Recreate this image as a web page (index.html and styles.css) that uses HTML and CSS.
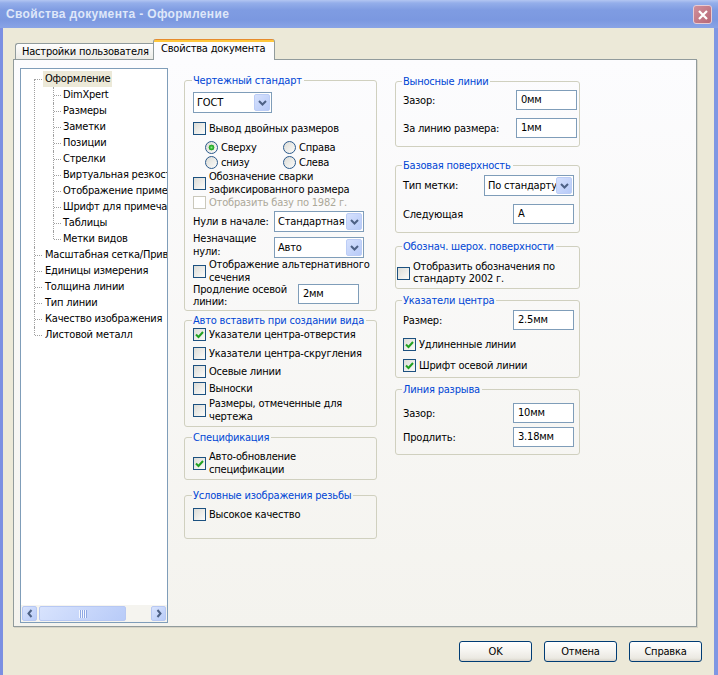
FILE: index.html
```html
<!DOCTYPE html>
<html lang="ru">
<head>
<meta charset="utf-8">
<title>Свойства документа - Оформление</title>
<link rel="stylesheet" href="styles.css">
</head>
<body>
<div class="window">
  <div class="titlebar">
    <span class="title">Свойства документа - Оформление</span>
    <span class="close"><svg width="10" height="10" viewBox="0 0 10 10"><path d="M1 1 L9 9 M9 1 L1 9" stroke="#fff" stroke-width="2.2" fill="none"/></svg></span>
  </div>
  <div class="client">
    <div class="tabs">
      <div class="tab">Настройки пользователя</div>
      <div class="tab active">Свойства документа</div>
    </div>
    <div class="panel">
      <div class="tree">
        <ul class="tree-list root">
          <li class="first"><span class="node sel">Оформление</span>
            <ul class="children">
              <li><span class="node">DimXpert</span></li>
              <li><span class="node">Размеры</span></li>
              <li><span class="node">Заметки</span></li>
              <li><span class="node">Позиции</span></li>
              <li><span class="node">Стрелки</span></li>
              <li><span class="node">Виртуальная резкость</span></li>
              <li><span class="node">Отображение примечаний</span></li>
              <li><span class="node">Шрифт для примечаний</span></li>
              <li><span class="node">Таблицы</span></li>
              <li><span class="node">Метки видов</span></li>
            </ul>
          </li>
          <li><span class="node">Масштабная сетка/Привязки</span></li>
          <li><span class="node">Единицы измерения</span></li>
          <li><span class="node">Толщина линии</span></li>
          <li><span class="node">Тип линии</span></li>
          <li><span class="node">Качество изображения</span></li>
          <li><span class="node">Листовой металл</span></li>
        </ul>
        <div class="hscroll">
          <span class="sbtn"><svg width="6" height="9" viewBox="0 0 6 9"><path d="M4.5 1 L1.5 4.5 L4.5 8" fill="none" stroke="#4d6185" stroke-width="2"/></svg></span>
          <span class="thumb"><span class="grip"></span></span>
          <span class="sbtn end"><svg width="6" height="9" viewBox="0 0 6 9"><path d="M1.5 1 L4.5 4.5 L1.5 8" fill="none" stroke="#4d6185" stroke-width="2"/></svg></span>
        </div>
      </div>

      <div class="col mid">
        <fieldset class="grp">
          <legend>Чертежный стандарт</legend>
          <div class="combo cw79 mt5"><span class="cv">ГОСТ</span><span class="cbtn"><svg width="9" height="6" viewBox="0 0 9 6"><path d="M1 1 L4.5 4.5 L8 1" fill="none" stroke="#4d6185" stroke-width="2"/></svg></span></div>
          <div class="chk h15 mt8"><span class="cb"></span><span class="ct">Вывод двойных размеров</span></div>
          <div class="radios mt4">
            <div class="rad"><span class="rb on"></span><span>Сверху</span></div>
            <div class="rad"><span class="rb"></span><span>Справа</span></div>
            <div class="rad"><span class="rb"></span><span>снизу</span></div>
            <div class="rad"><span class="rb"></span><span>Слева</span></div>
          </div>
          <div class="chk"><span class="cb"></span><span class="ct">Обозначение сварки<br>зафиксированного размера</span></div>
          <div class="chk h13 dis"><span class="cb cb-dis"></span><span class="ct">Отобразить базу по 1982 г.</span></div>
          <div class="row mt2"><span class="lbl lw81 nowrap">Нули в начале:</span><div class="combo cw90"><span class="cv">Стандартная</span><span class="cbtn"><svg width="9" height="6" viewBox="0 0 9 6"><path d="M1 1 L4.5 4.5 L8 1" fill="none" stroke="#4d6185" stroke-width="2"/></svg></span></div></div>
          <div class="row end"><span class="lbl lw81">Незначащие<br>нули:</span><div class="combo cw90"><span class="cv">Авто</span><span class="cbtn"><svg width="9" height="6" viewBox="0 0 9 6"><path d="M1 1 L4.5 4.5 L8 1" fill="none" stroke="#4d6185" stroke-width="2"/></svg></span></div></div>
          <div class="chk"><span class="cb"></span><span class="ct">Отображение альтернативного<br>сечения</span></div>
          <div class="row start pb2"><span class="lbl lw105 lh12">Продление осевой<br>линии:</span><div class="edit ew60">2мм</div></div>
        </fieldset>

        <fieldset class="grp mt3 pb3">
          <legend>Авто вставить при создании вида</legend>
          <div class="chk h14"><span class="cb"><svg width="9" height="9" viewBox="0 0 9 9"><path d="M1 4.5 L3.5 7 L8 2" fill="none" stroke="#21a121" stroke-width="2"/></svg></span><span class="ct">Указатели центра-отверстия</span></div>
          <div class="chk h14 mt5"><span class="cb"></span><span class="ct">Указатели центра-скругления</span></div>
          <div class="chk h14 mt4"><span class="cb"></span><span class="ct">Осевые линии</span></div>
          <div class="chk h14 mt3"><span class="cb"></span><span class="ct">Выноски</span></div>
          <div class="chk mt2"><span class="cb"></span><span class="ct">Размеры, отмеченные для<br>чертежа</span></div>
        </fieldset>

        <fieldset class="grp mt4 pb3">
          <legend>Спецификация</legend>
          <div class="chk mt6"><span class="cb"><svg width="9" height="9" viewBox="0 0 9 9"><path d="M1 4.5 L3.5 7 L8 2" fill="none" stroke="#21a121" stroke-width="2"/></svg></span><span class="ct">Авто-обновление<br>спецификации</span></div>
        </fieldset>

        <fieldset class="grp mt9 pb17">
          <legend>Условные изображения резьбы</legend>
          <div class="chk h14 mt5"><span class="cb"></span><span class="ct">Высокое качество</span></div>
        </fieldset>
      </div>

      <div class="col right">
        <fieldset class="grp gr pr2 pb8">
          <legend>Выносные линии</legend>
          <div class="row h20 mt2"><span class="lbl grow">Зазор:</span><div class="edit ew60">0мм</div></div>
          <div class="row h20 mt8"><span class="lbl grow">За линию размера:</span><div class="edit ew60">1мм</div></div>
        </fieldset>

        <fieldset class="grp gr mt12 pb8">
          <legend>Базовая поверхность</legend>
          <div class="row mt3"><span class="lbl grow">Тип метки:</span><div class="combo cw90"><span class="cv">По стандарту</span><span class="cbtn"><svg width="9" height="6" viewBox="0 0 9 6"><path d="M1 1 L4.5 4.5 L8 1" fill="none" stroke="#4d6185" stroke-width="2"/></svg></span></div></div>
          <div class="row h20 mt8"><span class="lbl grow">Следующая</span><div class="edit ew60">A</div></div>
        </fieldset>

        <fieldset class="grp gr gc mt7 pb3">
          <legend>Обознач. шерох. поверхности</legend>
          <div class="chk lh12 mt8"><span class="cb"></span><span class="ct">Отобразить обозначения по<br>стандарту 2002 г.</span></div>
        </fieldset>

        <fieldset class="grp gr mt5 pb5">
          <legend>Указатели центра</legend>
          <div class="row h20 mt3"><span class="lbl grow">Размер:</span><div class="edit ew60">2.5мм</div></div>
          <div class="chk h14 mt7"><span class="cb"><svg width="9" height="9" viewBox="0 0 9 9"><path d="M1 4.5 L3.5 7 L8 2" fill="none" stroke="#21a121" stroke-width="2"/></svg></span><span class="ct">Удлиненные линии</span></div>
          <div class="chk h14 mt7"><span class="cb"><svg width="9" height="9" viewBox="0 0 9 9"><path d="M1 4.5 L3.5 7 L8 2" fill="none" stroke="#21a121" stroke-width="2"/></svg></span><span class="ct">Шрифт осевой линии</span></div>
        </fieldset>

        <fieldset class="grp gr mt5 pb7">
          <legend>Линия разрыва</legend>
          <div class="row h20 mt7"><span class="lbl grow">Зазор:</span><div class="edit ew60">10мм</div></div>
          <div class="row h20 mt4"><span class="lbl grow">Продлить:</span><div class="edit ew60">3.18мм</div></div>
        </fieldset>
      </div>
    </div>
    <div class="buttons">
      <div class="btn">OK</div>
      <div class="btn">Отмена</div>
      <div class="btn">Справка</div>
    </div>
  </div>
</div>
</body>
</html>
```
FILE: styles.css
```css
* { box-sizing: border-box; }
html, body { margin: 0; padding: 0; }
body {
  width: 718px;
  height: 675px;
  overflow: hidden;
  background: #ece9d8;
  font-family: "DejaVu Sans Condensed", "Liberation Sans", sans-serif;
  font-size: 11px;
  letter-spacing: -0.2px;
  color: #000;
}
.window { width: 718px; height: 675px; display: flex; flex-direction: column; }

/* title bar */
.titlebar {
  height: 28px;
  flex: none;
  display: flex;
  align-items: center;
  justify-content: space-between;
  padding: 0 6px 0 6px;
  background: linear-gradient(to bottom, #b3c6f2 0, #94aeea 3px, #7f9ce2 10px, #7b98e0 20px, #89a4e6 28px);
}
.title {
  font-family: "Liberation Sans", sans-serif;
  font-weight: bold;
  font-size: 12px;
  color: #dfe7f9;
  letter-spacing: 0.35px;
}
.close {
  width: 19px;
  height: 19px;
  border: 1px solid #e8ccd3;
  border-radius: 3px;
  background: linear-gradient(135deg, #d08f9b, #b76876);
  display: flex;
  align-items: center;
  justify-content: center;
  margin-top: 1px;
}

/* client */
.client {
  flex: 1;
  display: flex;
  flex-direction: column;
  border-left: 3px solid #7b8fe2;
  border-right: 4px solid #7f97e3;
  padding: 11px 0 0 10px;
}
.tabs {
  height: 20px;
  display: flex;
  align-items: flex-end;
  padding-left: 2px;
  position: relative;
  z-index: 1;
}
.tab {
  height: 16px;
  width: 138px;
  padding-left: 6px;
  line-height: 15px;
  border: 1px solid #919b9c;
  border-bottom: none;
  border-right: none;
  border-radius: 3px 0 0 0;
  background: linear-gradient(#fefefe, #ecebe6);
  white-space: nowrap;
  overflow: hidden;
}
.tab.active {
  width: 122px;
  height: 21px;
  margin-bottom: -1px;
  padding-left: 7px;
  padding-top: 3px;
  line-height: 14px;
  border-right: 1px solid #919b9c;
  border-top: none;
  border-radius: 3px 3px 0 0;
  background: linear-gradient(#e68b2c 0, #e68b2c 1px, #ffc73c 1px, #ffc73c 3px, #fcfcfe 3px);
}
.panel {
  height: 568px;
  margin-right: 17px;
  border: 1px solid #919b9c;
  background: linear-gradient(#fcfcfe, #f4f3ee);
  box-shadow: 1px 1px 0 #d6d3c6;
  display: flex;
  align-items: flex-start;
  padding: 8px 0 0 6px;
}

/* tree */
.tree {
  width: 148px;
  height: 555px;
  flex: none;
  border: 1px solid #7f9db9;
  background: #fff;
  display: flex;
  flex-direction: column;
}
.tree-list {
  flex: 1;
  list-style: none;
  margin: 0;
  padding: 2px 0 0 0;
  overflow: hidden;
  white-space: nowrap;
}
.tree-list li { position: relative; line-height: 16px; }
.root > li { padding-left: 22px; }
.root > li::before {
  content: "";
  position: absolute;
  left: 13px;
  top: 0;
  bottom: 0;
  border-left: 1px dotted #a0a0a0;
}
.root > li.first::before { top: 8px; }
.root > li:last-child::before { bottom: auto; height: 8px; }
.root > li::after {
  content: "";
  position: absolute;
  left: 14px;
  top: 8px;
  width: 7px;
  border-top: 1px dotted #a0a0a0;
}
.children { list-style: none; margin: 0 0 0 -22px; padding: 0; }
.children > li { padding-left: 40px; }
.children > li::before {
  content: "";
  position: absolute;
  left: 32px;
  top: 0;
  bottom: 0;
  border-left: 1px dotted #a0a0a0;
}
.children > li:last-child::before { bottom: auto; height: 8px; }
.children > li::after {
  content: "";
  position: absolute;
  left: 33px;
  top: 8px;
  width: 7px;
  border-top: 1px dotted #a0a0a0;
}
.node { display: inline-block; padding: 0 2px; height: 16px; }
.node.sel { background: #ece9d8; }

.hscroll {
  height: 17px;
  flex: none;
  display: flex;
  align-items: center;
  padding: 0 1px;
  background: #f5f4ef;
}
.sbtn, .thumb {
  height: 15px;
  border: 1px solid #b7c8f3;
  border-radius: 2px;
  background: linear-gradient(135deg, #d8e3fd, #b8cbf8);
  display: flex;
  align-items: center;
  justify-content: center;
}
.sbtn { width: 15px; }
.sbtn.end { margin-left: auto; }
.thumb { width: 87px; margin-left: 2px; }
.grip {
  width: 8px;
  height: 8px;
  background: repeating-linear-gradient(to right, #f4f7ff 0, #f4f7ff 1px, #8ea8e4 1px, #8ea8e4 2px);
}

/* columns & groups */
.col { flex: none; }
.mid { width: 193px; margin-left: 16px; margin-top: 6px; }
.right { width: 185px; margin-left: 18px; margin-top: 7px; }

.grp {
  margin: 0;
  min-inline-size: 0;
  border: 1px solid #d0d0bf;
  border-radius: 3px;
  padding: 0 6px 0 8px;
}
.grp legend {
  padding: 0 2px 0 1px;
  margin-left: -1px;
  line-height: 13px;
  color: #0046d5;
  white-space: nowrap;
}
.gr { padding: 0 5px 0 7px; }
.gc { padding-left: 1px; }
.gc legend { margin-left: 5px; }

.row { display: flex; align-items: center; }
.row.end { align-items: flex-end; }
.row.start { align-items: flex-start; }
.lbl { line-height: 13px; }
.lw81 { width: 81px; flex: none; }
.lw105 { width: 105px; flex: none; }
.grow { flex: 1; }
.nowrap { white-space: nowrap; }
.lbl.lh12 { line-height: 12px; }

.chk { display: flex; align-items: center; gap: 3px; line-height: 13px; }
.chk.lh12 { line-height: 12px; }
.ct { white-space: nowrap; }
.rad { display: flex; align-items: center; gap: 3px; line-height: 13px; }
.radios {
  display: grid;
  grid-template-columns: 78px 78px;
  grid-auto-rows: 15px;
  padding-left: 12px;
}
.cb {
  width: 13px;
  height: 13px;
  flex: none;
  border: 1px solid #1c5180;
  background: linear-gradient(135deg, #dcdcd7, #fbfbf9);
  display: flex;
  align-items: center;
  justify-content: center;
}
.cb.cb-dis { border-color: #cac8bb; background: #fff; }
.dis { color: #aca899; }
.rb {
  width: 13px;
  height: 13px;
  flex: none;
  border: 1px solid #2b5a8c;
  border-radius: 50%;
  background: linear-gradient(135deg, #dcdcd7, #fbfbf9);
}
.rb.on {
  background: radial-gradient(circle, #8ee88e 0, #3bbb3b 1.5px, #21a121 2.6px, transparent 3.2px), linear-gradient(135deg, #dcdcd7, #fbfbf9);
}

.combo {
  height: 21px;
  flex: none;
  display: flex;
  align-items: stretch;
  border: 1px solid #7f9db9;
  background: #fff;
  padding: 1px;
}
.cw79 { width: 79px; }
.cw90 { width: 90px; }
.cv {
  flex: 1;
  overflow: hidden;
  white-space: nowrap;
  padding-left: 2px;
  line-height: 17px;
}
.cbtn {
  width: 16px;
  flex: none;
  border: 1px solid #bccdf6;
  border-radius: 2px;
  background: linear-gradient(135deg, #d6e1fd, #b7caf8);
  display: flex;
  align-items: center;
  justify-content: center;
}
.edit {
  height: 20px;
  flex: none;
  border: 1px solid #7f9db9;
  background: #fff;
  padding-left: 4px;
  line-height: 18px;
  white-space: nowrap;
}
.ew60 { width: 61px; }

.h13 { height: 13px; }
.h14 { height: 14px; }
.h15 { height: 15px; }
.h20 { height: 20px; }
.mt2 { margin-top: 2px; }
.mt3 { margin-top: 3px; }
.mt4 { margin-top: 4px; }
.mt5 { margin-top: 5px; }
.mt6 { margin-top: 6px; }
.mt7 { margin-top: 7px; }
.mt8 { margin-top: 8px; }
.mt9 { margin-top: 9px; }
.mt12 { margin-top: 12px; }
.pb2 { padding-bottom: 2px; }
.pb3 { padding-bottom: 3px; }
.pb5 { padding-bottom: 5px; }
.pb7 { padding-bottom: 7px; }
.pb8 { padding-bottom: 8px; }
.pb17 { padding-bottom: 17px; }
.pr2 { padding-right: 2px; }

/* buttons */
.buttons {
  display: flex;
  justify-content: flex-end;
  gap: 12px;
  margin-top: 14px;
  padding-right: 12px;
}
.btn {
  width: 73px;
  height: 21px;
  border: 1px solid #003c74;
  border-radius: 3px;
  background: linear-gradient(#ffffff 0, #f6f5f1 45%, #ebe9e2 85%, #d8d3c8 100%);
  display: flex;
  align-items: center;
  justify-content: center;
}
```
